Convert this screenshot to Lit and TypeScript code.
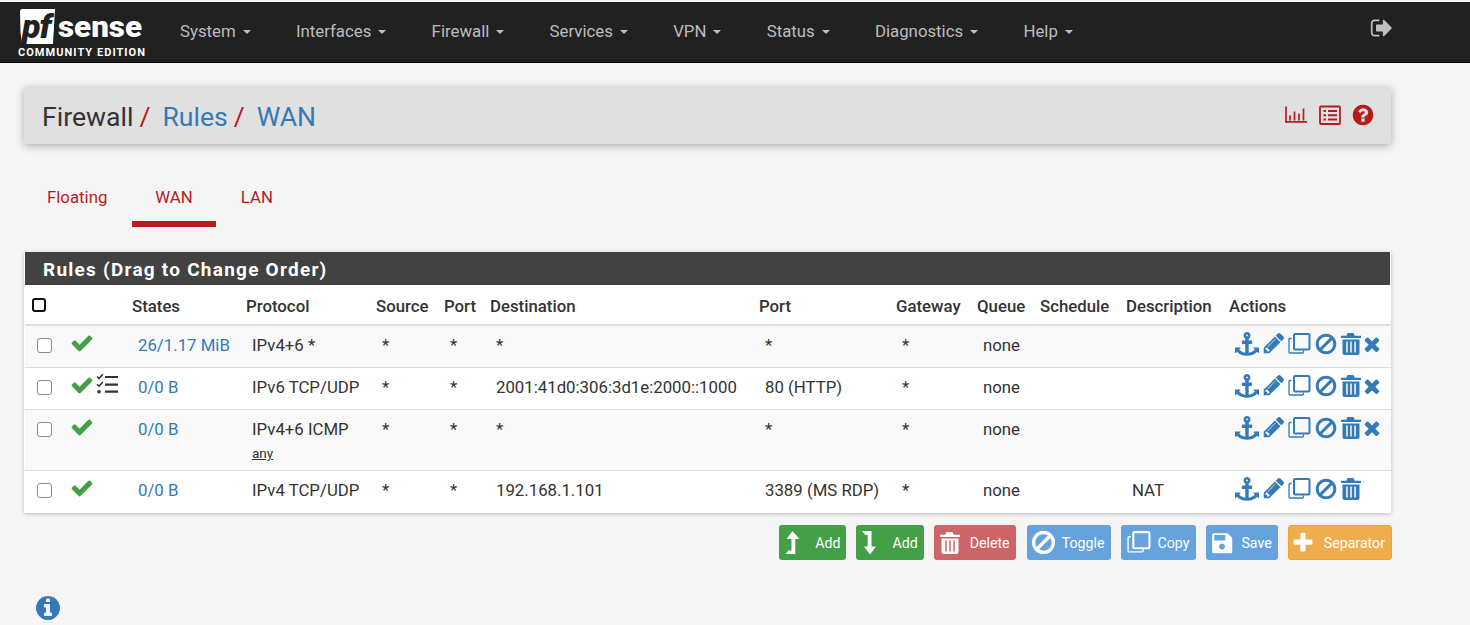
import { LitElement, html, css } from "lit";
import { customElement } from "lit/decorators.js";

const P: Record<string, string> = {
  check: "M1671 566q0 40-28 68l-724 724-136 136q-28 28-68 28t-68-28l-136-136-362-362q-28-28-28-68t28-68l136-136q28-28 68-28t68 28l294 295 656-657q28-28 68-28t68 28l136 136q28 28 28 68z",
  times: "M1490 1322q0 40-28 68l-136 136q-28 28-68 28t-68-28l-294-294-294 294q-28 28-68 28t-68-28l-136-136q-28-28-28-68t28-68l294-294-294-294q-28-28-28-68t28-68l136-136q28-28 68-28t68 28l294 294 294-294q28-28 68-28t68 28l136 136q28 28 28 68t-28 68l-294 294 294 294q28 28 28 68z",
  plus: "M1600 736v192q0 40-28 68t-68 28h-416v416q0 40-28 68t-68 28h-192q-40 0-68-28t-28-68v-416h-416q-40 0-68-28t-28-68v-192q0-40 28-68t68-28h416v-416q0-40 28-68t68-28h192q40 0 68 28t28 68v416h416q40 0 68 28t28 68z",
  ban: "M1440 893q0-161-87-295l-754 753q137 89 297 89 111 0 211.500-43.500t173.500-116.500 116-174.500 43-212.500zm-999 299l755-754q-135-91-300-91-148 0-273 73t-198 199-73 274q0 162 89 299zm1223-299q0 157-61 300t-163.500 246-245 164-298.500 61-298.500-61-245-164-163.500-246-61-300 61-299.500 163.500-245.500 245-164 298.500-61 298.500 61 245 164 163.500 245.500 61 299.500z",
  pencil: "M491 1536l91-91-235-235-91 91v107h128v128h107zm523-928q0-22-22-22-10 0-17 7l-542 542q-7 7-7 17 0 22 22 22 10 0 17-7l542-542q7-7 7-17zm-54-192l416 416-832 832h-416v-416zm683 96q0 53-37 90l-166 166-416-416 166-165q36-38 90-38 53 0 91 38l235 234q37 39 37 91z",
  anchor: "M960 256q0-26-19-45t-45-19-45 19-19 45 19 45 45 19 45-19 19-45zm832 928v352q0 22-20 30-8 2-12 2-12 0-23-9l-93-93q-119 143-318.500 226.500t-429.500 83.500-429.500-83.500-318.500-226.500l-93 93q-9 9-23 9-4 0-12-2-20-8-20-30v-352q0-14 9-23t23-9h352q22 0 30 20 8 19-7 35l-100 100q67 91 189.500 153.500t271.500 82.500v-647h-192q-26 0-45-19t-19-45v-128q0-26 19-45t45-19h192v-163q-58-34-93-92.500t-35-128.500q0-106 75-181t181-75 181 75 75 181q0 70-35 128.500t-93 92.500v163h192q26 0 45 19t19 45v128q0 26-19 45t-45 19h-192v647q149-20 271.500-82.500t189.500-153.500l-100-100q-15-16-7-35 8-20 30-20h352q14 0 23 9t9 23z",
  signout: "M704 1440q0 4 1 20t.5 26.500-3 23.500-10 19.500-20.500 6.500h-320q-119 0-203.500-84.500t-84.500-203.500v-704q0-119 84.500-203.500t203.500-84.500h320q13 0 22.500 9.500t9.500 22.500q0 4 1 20t.5 26.500-3 23.500-10 19.500-20.500 6.500h-320q-66 0-113 47t-47 113v704q0 66 47 113t113 47h312l11.500 1 11.500 3 8 5.500 7 9 2 13.500zm928-544q0 26-19 45l-544 544q-19 19-45 19t-45-19-19-45v-288h-448q-26 0-45-19t-19-45v-384q0-26 19-45t45-19h448v-288q0-26 19-45t45-19 45 19l544 544q19 19 19 45z",
  question: "M1024 1376v-192q0-14-9-23t-23-9h-192q-14 0-23 9t-9 23v192q0 14 9 23t23 9h192q14 0 23-9t9-23zm256-672q0-88-55.500-163t-138.500-116-170-41q-243 0-371 213-15 24 8 42l132 100q7 6 19 6 16 0 25-12 53-68 86-92 34-24 86-24 48 0 85.500 26t37.500 59q0 38-20 61t-68 45q-63 28-115.500 86.500t-52.500 125.500v36q0 14 9 23t23 9h192q14 0 23-9t9-23q0-19 21.500-49.500t54.500-49.500q32-18 49-28.500t46-35 44.500-48 28-60.500 12.500-81zm384 192q0 209-103 385.500t-279.500 279.500-385.500 103-385.500-103-279.500-279.500-103-385.500 103-385.500 279.500-279.500 385.500-103 385.500 103 279.500 279.500 103 385.500z",
  info: "M1152 1376v-160q0-14-9-23t-23-9h-96v-512q0-14-9-23t-23-9h-320q-14 0-23 9t-9 23v160q0 14 9 23t23 9h96v320h-96q-14 0-23 9t-9 23v160q0 14 9 23t23 9h448q14 0 23-9t9-23zm-128-896v-160q0-14-9-23t-23-9h-192q-14 0-23 9t-9 23v160q0 14 9 23t23 9h192q14 0 23-9t9-23zm640 416q0 209-103 385.500t-279.500 279.500-385.500 103-385.500-103-279.500-279.500-103-385.500 103-385.500 279.500-279.500 385.500-103 385.500 103 279.500 279.500 103 385.500z",
  save: "M256 160h1010q40 0 68 28l298 298q28 28 28 68v1018q0 40-28 68t-68 28h-1308q-40 0-68-28t-28-68v-1316q0-40 28-68t68-28zm64 170v340q0 30 30 30h760q30 0 30-30v-340q0-30-30-30h-760q-30 0-30 30zm576 600a224 224 0 1 0 .1 0z",
};

const fa = (name: string, cls = "") =>
  html`<svg class=${cls} viewBox="0 0 1792 1792" aria-hidden="true"><path fill="currentColor" fill-rule="evenodd" d=${P[name]}></path></svg>`;

const clone = (cls = "") =>
  html`<svg class=${cls} viewBox="0 0 24 24" fill="none" stroke="currentColor" aria-hidden="true">
    <rect x="7" y="2" width="15.500" height="15.500" rx="1.200" stroke-width="2"></rect>
    <path d="M4.500 6.500H3a1 1 0 0 0-1 1V20a1 1 0 0 0 1 1h12.500a1 1 0 0 0 1-1v-1.500" stroke-width="1.300"></path>
  </svg>`;

const trash = (cls = "") =>
  html`<svg class=${cls} viewBox="0 0 24 24" aria-hidden="true">
    <path
      fill="currentColor"
      fill-rule="evenodd"
      d="M7.500 1h6l1.200 2.700H21V6H1V3.700h5.300zM2.500 7.500h17V21a2 2 0 0 1-2 2h-13a2 2 0 0 1-2-2zM6.200 9.500v11h1.500v-11zM10.250 9.500v11h1.500v-11zM14.300 9.500v11h1.500v-11z"
    ></path>
  </svg>`;

const levelUp = html`<svg class="lv" viewBox="0 0 16 24" aria-hidden="true">
  <path fill="currentColor" d="M7.500 0L14.500 8H10.300V23H.5L3.500 19.500H6.500V8H1.500z"></path>
</svg>`;

const levelDown = html`<svg class="lv" viewBox="0 0 16 24" aria-hidden="true">
  <path fill="currentColor" d="M0 0H9.500V15.500H14L8 23.500 2 15.500H5.700V3.700H3z"></path>
</svg>`;

const tasks = html`<svg class="tasks" viewBox="0 0 24 24" aria-hidden="true">
  <path fill="none" stroke="currentColor" stroke-width="1.600" d="M1 3.500l2 2 3.800-4.200M1 11.200l2 2 3.800-4.200"></path>
  <circle cx="3" cy="18.700" r="1.800" fill="currentColor"></circle>
  <path fill="none" stroke="currentColor" stroke-width="2.200" d="M9 4h13M9 11.700h13M9 18.700h13"></path>
</svg>`;

const barChart = html`<svg class="hd" viewBox="0 0 24 24" fill="none" stroke="currentColor" aria-hidden="true">
  <path stroke-width="1.700" d="M2 2.500v15.300H23"></path>
  <path stroke-width="1.700" d="M6 11.500v5M10.500 7.500v9M15 9.500v7M19.500 4.500v12"></path>
</svg>`;

const listAlt = html`<svg class="hd" viewBox="0 0 24 24" fill="none" stroke="currentColor" aria-hidden="true">
  <rect x="2" y="2.500" width="20" height="17.500" rx="1" stroke-width="1.800"></rect>
  <path stroke-width="2" d="M5.500 7h2.500M5.500 11.200h2.500M5.500 15.500h2.500M10 7h9M10 11.200h9M10 15.500h9"></path>
</svg>`;

const logo = html`<svg class="logo" viewBox="0 0 130 60" aria-label="pfSense Community Edition">
  <path fill="#fff" d="M4.500 7H37L35 42H4L2.500 30 2 9.500Q2 7 4.500 7z"></path>
  <text x="4" y="36" class="lpf">pf</text>
  <text x="40" y="35" class="lsense" textLength="84" lengthAdjust="spacingAndGlyphs">sense</text>
  <text x="0" y="54" class="lce" textLength="127">COMMUNITY EDITION</text>
</svg>`;

interface Row {
  states: string;
  proto: string;
  sub?: string;
  src: string;
  sport: string;
  dest: string;
  dport: string;
  gw: string;
  q: string;
  desc: string;
  tasks?: boolean;
  noDel?: boolean;
}

const rows: Row[] = [
  { states: "26/1.17 MiB", proto: "IPv4+6 *", src: "*", sport: "*", dest: "*", dport: "*", gw: "*", q: "none", desc: "" },
  { states: "0/0 B", proto: "IPv6 TCP/UDP", src: "*", sport: "*", dest: "2001:41d0:306:3d1e:2000::1000", dport: "80 (HTTP)", gw: "*", q: "none", desc: "", tasks: true },
  { states: "0/0 B", proto: "IPv4+6 ICMP", sub: "any", src: "*", sport: "*", dest: "*", dport: "*", gw: "*", q: "none", desc: "" },
  { states: "0/0 B", proto: "IPv4 TCP/UDP", src: "*", sport: "*", dest: "192.168.1.101", dport: "3389 (MS RDP)", gw: "*", q: "none", desc: "NAT", noDel: true },
];

const headers = ["States", "Protocol", "Source", "Port", "Destination", "Port", "Gateway", "Queue", "Schedule", "Description", "Actions"];
const widths = [40, 67, 114, 130, 68, 46, 269, 137, 81, 63, 86, 103, 162];
const nav = ["System", "Interfaces", "Firewall", "Services", "VPN", "Status", "Diagnostics", "Help"];

@customElement("app-root")
export class AppRoot extends LitElement {
  static styles = css`
    :host {
      display: block;
      height: 625px;
      overflow: hidden;
      background: #f5f5f5;
      font-family: Roboto, "Liberation Sans", sans-serif;
      font-size: 16.800px;
      color: #333;
    }
    a { color: #337ab7; text-decoration: none; }
    .navbar {
      margin-top: 2px;
      height: 60px;
      background: #212121;
      border-bottom: 1px solid #000;
      display: flex;
      align-items: flex-start;
      padding: 0 76px 0 18px;
    }
    .logo { width: 130px; height: 60px; flex: none; }
    .lpf { font: italic 900 34px Roboto, sans-serif; fill: #212121; letter-spacing: -1px; }
    .lsense { font: 900 29px Roboto, sans-serif; fill: #fff; }
    .lce { font: 700 11px Roboto, sans-serif; fill: #fff; }
    .menu { display: flex; gap: 45.300px; margin: 20px 0 0 32px; flex: 1; line-height: 19px; }
    .menu span { color: #bdbdbd; display: flex; align-items: center; gap: 7px; }
    .menu i { width: 0; height: 0; border: 4px solid transparent; border-top-color: #bdbdbd; border-bottom: 0; }
    .signout { width: 24px; height: 24px; color: #c0c0c0; margin-top: 14px; }
    main { width: 1368px; margin-left: 24px; }
    .title {
      margin-top: 24px;
      height: 57px;
      background: #e0e0e0;
      border-radius: 2px;
      box-shadow: 0 2px 8px rgba(0, 0, 0, 0.3);
      display: flex;
      align-items: center;
      justify-content: space-between;
      padding: 0 16px 0 18px;
      box-sizing: border-box;
      width: 1367px;
    }
    .crumb { font-size: 26.600px; color: #333; display: flex; padding-top: 2px; }
    .crumb b { font-weight: 400; color: #b71c1c; margin: 0 12px 0 6px; }
    .hicons { display: flex; align-items: center; color: #b71c1c; gap: 10px; }
    .hd { width: 24px; height: 24px; }
    .qm { width: 24px; height: 24px; margin: -2px 0 0 -1px; }
    .tabs { display: flex; gap: 2px; margin-top: 30px; }
    .tabs span {
      color: #b71c1c;
      padding: 14px 23px 0;
      height: 53px;
      box-sizing: border-box;
      line-height: 19px;
    }
    .tabs .on { border-bottom: 6px solid #b71c1c; }
    .panel {
      margin-top: 25px;
      width: 1367px;
      background: #fff;
      box-shadow: 0 1px 4px rgba(0, 0, 0, 0.22);
      padding: 0 0 1px 1px;
      box-sizing: border-box;
    }
    .heading {
      height: 33px;
      background: #424242;
      color: #fff;
      font-size: 19px;
      font-weight: 700;
      letter-spacing: 1.240px;
      line-height: 35px;
      padding-left: 18px;
      margin-right: 1px;
    }
    table { border-collapse: collapse; table-layout: fixed; width: 1366px; margin-top: 1px; }
    th {
      text-align: left;
      font-weight: 500;
      height: 36px;
      padding: 2px 0 0;
      border-bottom: 2px solid #ddd;
      color: #333;
      vertical-align: middle;
    }
    td { padding: 8px 0 0 6px; vertical-align: top; line-height: 22px; height: 33px; border-bottom: 1px solid #ddd; }
    tbody tr:nth-child(odd) { background: #f9f9f9; }
    tbody tr:last-child td { border-bottom: 0; }
    td.ic { padding-top: 6px; }
    .cell { display: flex; color: #43a047; margin: -1px 0 0 -1px; }
    .cell svg { width: 24px; height: 24px; }
    .cell .tasks { color: #333; margin-left: 2px; }
    .cb {
      appearance: none;
      -webkit-appearance: none;
      display: block;
      margin: 6px 0 0 6px;
      width: 15px;
      height: 15px;
      border: 1.500px solid #8a8a8a;
      border-radius: 3px;
      background: #fff;
      box-sizing: border-box;
    }
    .hcb {
      appearance: none;
      -webkit-appearance: none;
      display: block;
      margin: -2px 0 0 7px;
      width: 14px;
      height: 14px;
      border: 2px solid #111;
      border-radius: 3px;
      background: #fff;
      box-sizing: border-box;
    }
    .sub { display: block; font-size: 13.500px; line-height: 18px; margin: 4px 0 8px; text-decoration: underline; color: #333; }
    .acts { display: flex; color: #337ab7; }
    .acts svg { width: 24px; height: 24px; flex: none; }
    .acts .an { margin-right: 3px; }
    .acts .pe { margin: -1px 1px 0 0; }
    .acts .cl { margin-right: 3px; }
    .acts .bn { margin-right: 2px; }
    .acts .tr { margin-right: -3px; }
    .acts .x { width: 22px; height: 22px; margin-top: 1px; }
    .btns { display: flex; justify-content: flex-end; gap: 10px; margin-top: 12px; }
    .btn {
      height: 35px;
      border-radius: 3px;
      color: #fff;
      display: flex;
      align-items: center;
      font-size: 14.200px;
      box-sizing: border-box;
      padding: 0 5px 0 3px;
      border: 1px solid transparent;
    }
    .btn svg { flex: none; width: 24px; height: 24px; }
    .btn .lv { width: 16px; margin-right: 14px; }
    .g { background: #43a047; padding-left: 5px; }
    .r { background: #cc6666; padding-left: 4px; margin-right: 1px; }
    .b { background: #66a3de; }
    .o { background: #f0ad4e; border-color: #eea236; padding: 0 6px 0 2px; }
    .r svg { margin-right: 7px; }
    .btn .big { width: 27px; height: 27px; margin: 0 5px 0 -1px; }
    .btn .cp { width: 25px; height: 25px; margin: 0 6px 0 1px; }
    .wd { padding-right: 6px; }
    .btn .sv { margin-right: 7px; }
    .btn .pl { margin-right: 9px; }
    .info { display: block; width: 28px; height: 28px; color: #337ab7; margin: 34px 0 0 10px; }
  `;

  private actions(r: Row) {
    return html`<div class="acts">
      ${fa("anchor", "an")}${fa("pencil", "pe")}${clone("cl")}${fa("ban", "bn")}${trash("tr")}${r.noDel ? "" : fa("times", "x")}
    </div>`;
  }

  render() {
    return html`
      <header class="navbar">
        ${logo}
        <nav class="menu">${nav.map((n) => html`<span>${n}<i></i></span>`)}</nav>
        ${fa("signout", "signout")}
      </header>
      <main>
        <div class="title">
          <div class="crumb">Firewall<b>/</b><a>Rules</a><b>/</b><a>WAN</a></div>
          <div class="hicons">${barChart}${listAlt}${fa("question", "qm")}</div>
        </div>
        <div class="tabs"><span>Floating</span><span class="on">WAN</span><span>LAN</span></div>
        <section class="panel">
          <div class="heading">Rules (Drag to Change Order)</div>
          <table>
            <colgroup>${widths.map((w) => html`<col style="width:${w}px" />`)}</colgroup>
            <thead>
              <tr>
                <th><input class="hcb" type="checkbox" /></th>
                <th></th>
                ${headers.map((h) => html`<th>${h}</th>`)}
              </tr>
            </thead>
            <tbody>
              ${rows.map(
                (r) => html`<tr>
                  <td class="ic"><input class="cb" type="checkbox" /></td>
                  <td class="ic"><div class="cell">${fa("check")}${r.tasks ? tasks : ""}</div></td>
                  <td><a>${r.states}</a></td>
                  <td>${r.proto}${r.sub ? html`<span class="sub">${r.sub}</span>` : ""}</td>
                  <td>${r.src}</td>
                  <td>${r.sport}</td>
                  <td>${r.dest}</td>
                  <td>${r.dport}</td>
                  <td>${r.gw}</td>
                  <td>${r.q}</td>
                  <td></td>
                  <td>${r.desc}</td>
                  <td class="ic">${this.actions(r)}</td>
                </tr>`
              )}
            </tbody>
          </table>
        </section>
        <div class="btns">
          <div class="btn g">${levelUp}Add</div>
          <div class="btn g">${levelDown}Add</div>
          <div class="btn r">${trash()}Delete</div>
          <div class="btn b wd">${fa("ban", "big")}Toggle</div>
          <div class="btn b wd">${clone("cp")}Copy</div>
          <div class="btn b">${fa("save", "sv")}Save</div>
          <div class="btn o">${fa("plus", "pl")}Separator</div>
        </div>
        ${fa("info", "info")}
      </main>
    `;
  }
}
